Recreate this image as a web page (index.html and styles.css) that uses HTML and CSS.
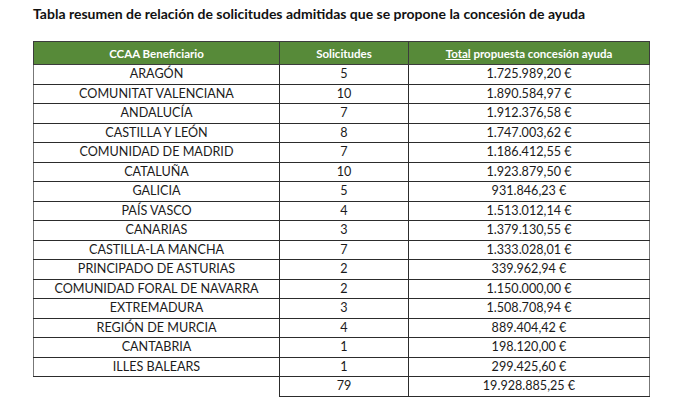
FILE: index.html
```html
<!DOCTYPE html>
<html lang="es">
<head>
<meta charset="utf-8">
<title>Tabla resumen</title>
<link rel="stylesheet" href="styles.css">
</head>
<body>
<div class="page">
  <h1 class="title">Tabla resumen de relación de solicitudes admitidas que se propone la concesión de ayuda</h1>
  <table class="summary">
    <colgroup>
      <col class="c1"><col class="c2"><col class="c3">
    </colgroup>
    <thead>
      <tr><th>CCAA Beneficiario</th><th>Solicitudes</th><th><u>Total</u> propuesta concesión ayuda</th></tr>
    </thead>
    <tbody>
      <tr><td>ARAGÓN</td><td>5</td><td>1.725.989,20 €</td></tr>
      <tr><td>COMUNITAT VALENCIANA</td><td>10</td><td>1.890.584,97 €</td></tr>
      <tr><td>ANDALUCÍA</td><td>7</td><td>1.912.376,58 €</td></tr>
      <tr><td>CASTILLA Y LEÓN</td><td>8</td><td>1.747.003,62 €</td></tr>
      <tr><td>COMUNIDAD DE MADRID</td><td>7</td><td>1.186.412,55 €</td></tr>
      <tr><td>CATALUÑA</td><td>10</td><td>1.923.879,50 €</td></tr>
      <tr><td>GALICIA</td><td>5</td><td>931.846,23 €</td></tr>
      <tr><td>PAÍS VASCO</td><td>4</td><td>1.513.012,14 €</td></tr>
      <tr><td>CANARIAS</td><td>3</td><td>1.379.130,55 €</td></tr>
      <tr><td>CASTILLA-LA MANCHA</td><td>7</td><td>1.333.028,01 €</td></tr>
      <tr><td>PRINCIPADO DE ASTURIAS</td><td>2</td><td>339.962,94 €</td></tr>
      <tr><td>COMUNIDAD FORAL DE NAVARRA</td><td>2</td><td>1.150.000,00 €</td></tr>
      <tr><td>EXTREMADURA</td><td>3</td><td>1.508.708,94 €</td></tr>
      <tr><td>REGIÓN DE MURCIA</td><td>4</td><td>889.404,42 €</td></tr>
      <tr><td>CANTABRIA</td><td>1</td><td>198.120,00 €</td></tr>
      <tr><td>ILLES BALEARS</td><td>1</td><td>299.425,60 €</td></tr>
      <tr class="total"><td class="blank"></td><td>79</td><td>19.928.885,25 €</td></tr>
    </tbody>
  </table>
  <p class="obs">Observaciones:</p>
</div>
</body>
</html>
```

FILE: styles.css
```css
html, body {
  margin: 0;
  padding: 0;
  background: #ffffff;
}
.page {
  padding: 5px 0 0 33px;
  font-family: Lato, "Noto Sans", sans-serif;
  color: #1b1b1b;
}
.title {
  margin: 0;
  font-size: 14px;
  font-weight: 700;
  line-height: 17px;
  color: #111;
}
.summary {
  margin-top: 19px;
  border-collapse: collapse;
  table-layout: fixed;
  width: 616px;
}
.c1 { width: 246px; }
.c2 { width: 129px; }
.c3 { width: 241px; }
.summary th {
  background: #578a39;
  color: #ffffff;
  font-size: 11.5px;
  font-weight: 700;
  height: 22px;
  padding: 0;
  border: 1px solid #3c3c3c;
  text-align: center;
}
.summary td {
  height: 18.5px;
  padding: 0;
  font-size: 12.6px;
  text-align: center;
  border: 1px solid #2c2c2c;
  line-height: 16px;
}
.summary tbody tr:first-child td { border-top-color: #555; }
.summary td:first-child { border-left-color: #777; }
.summary td:last-child { border-right-color: #777; }
.summary .total td.blank {
  border-left: none;
  border-bottom: none;
}
.obs {
  margin: 2px 0 0;
  font-size: 13px;
  font-weight: 700;
}
```
